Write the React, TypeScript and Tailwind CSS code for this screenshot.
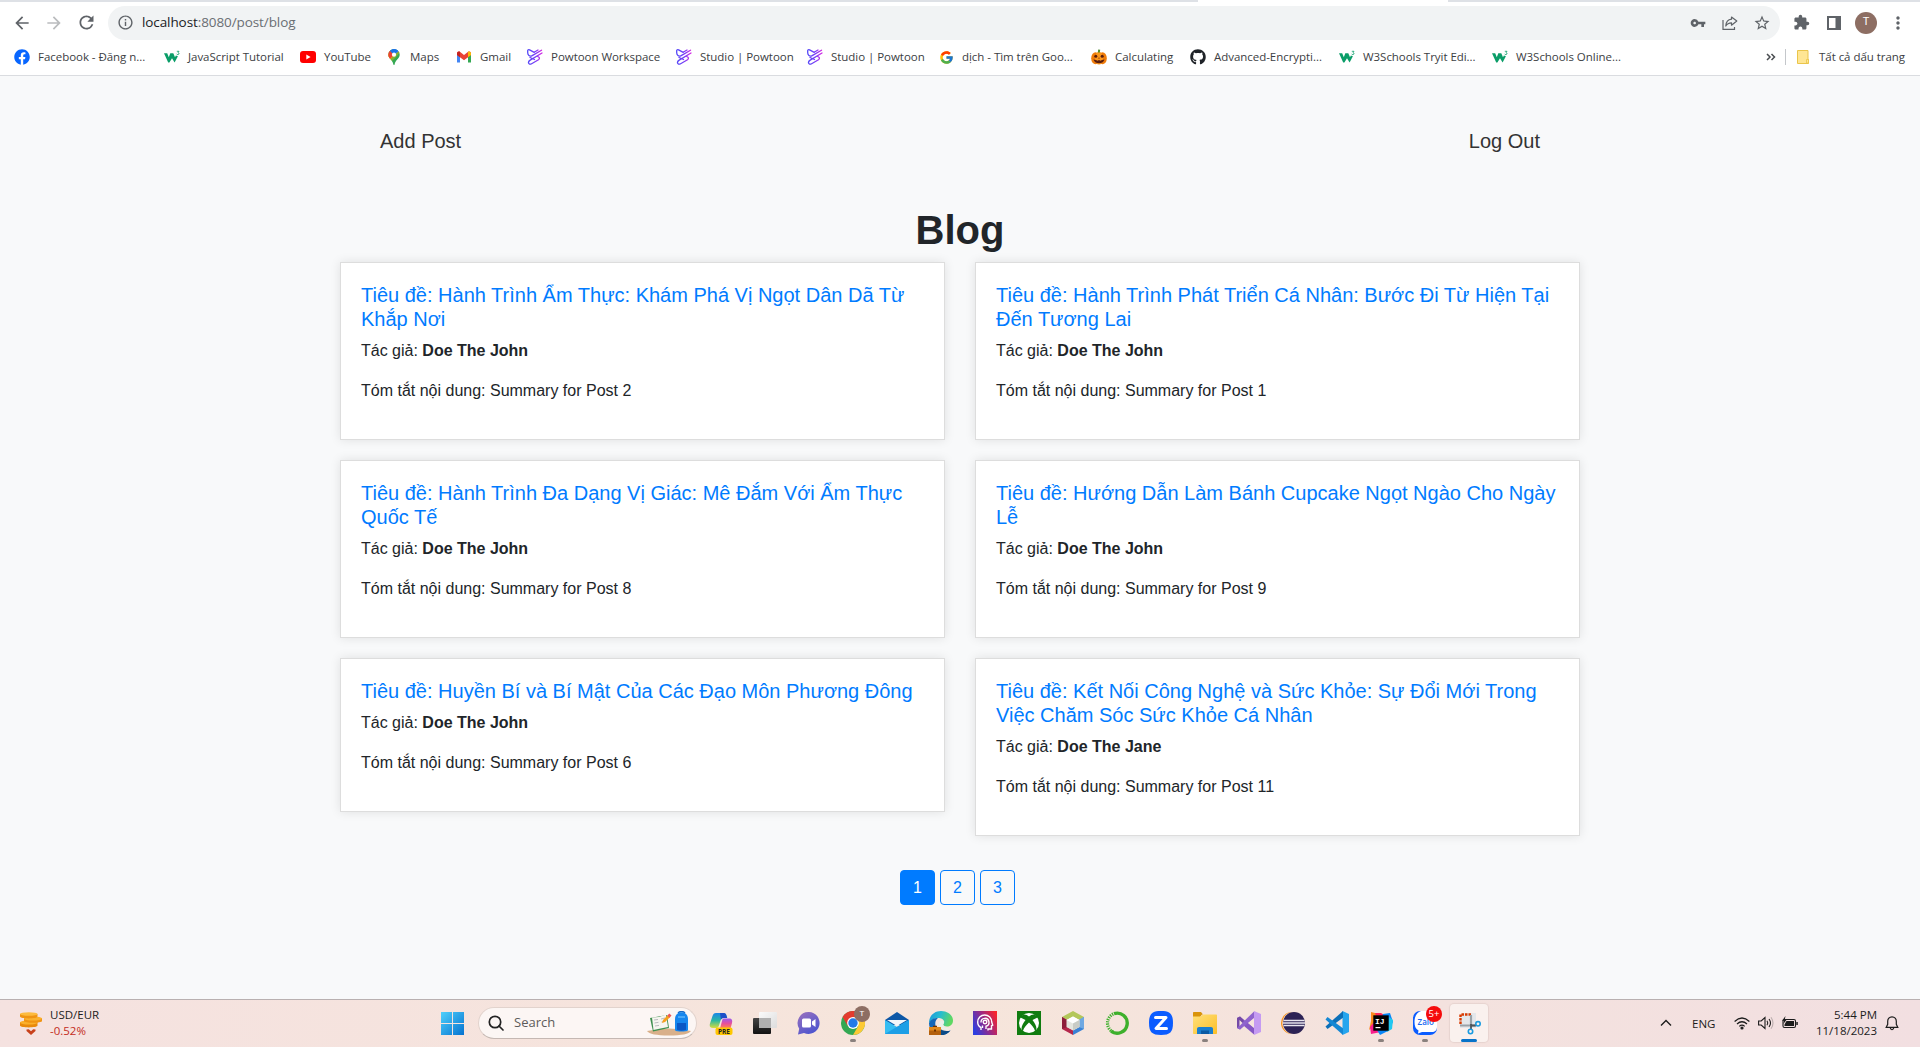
import type { ReactNode } from 'react';
import { FcGoogle } from 'react-icons/fc';
import { FaFacebook, FaGithub } from 'react-icons/fa';
import {
  MdArrowBack, MdArrowForward, MdRefresh, MdInfoOutline, MdVpnKey, MdStarBorder, MdExtension, MdMoreVert,
} from 'react-icons/md';

const W3 = () => (
  <svg viewBox="0 0 16 16" className="size-4">
    <path d="M0 4.200h3.200l1.600 4 1.500-4h3l1.700 4 .9-1.700 2 .8L10.600 13.500 8 9.200 5.400 13.500H4.200Z" fill="#0a9d68" />
    <path d="M12.800 2.300h2.200l-1 1.300c1.400.2 1.300 2-.2 2-.7 0-1-.3-1.200-.8" stroke="#0a9d68" strokeWidth=".8" fill="none" />
  </svg>
);
const YouTube = () => (
  <svg viewBox="0 0 16 16" className="size-4">
    <rect y="2" width="16" height="12" rx="3" fill="#f00" />
    <path d="M6.300 5.500v5l4.300-2.500Z" fill="#fff" />
  </svg>
);
const Maps = () => (
  <svg viewBox="0 0 16 16" className="size-4">
    <defs><clipPath id="pin"><path d="M8 0a5.700 5.700 0 0 1 5.700 5.700C13.700 9.500 9.500 10.500 8.600 15.400q-.6 1.200-1.200 0C6.500 10.500 2.300 9.500 2.300 5.700A5.700 5.700 0 0 1 8 0Z" /></clipPath></defs>
    <g clipPath="url(#pin)">
      <path d="M0 0h16v16H0Z" fill="#34a853" />
      <path d="M8 6 16 0H6Z" fill="#4285f4" />
      <path d="M8 6 2 13 0 8l4-6Z" fill="#fbbc04" />
      <path d="M8 6 4 10 0 7V2l4-1Z" fill="#ea4335" />
      <path d="M8 6 3 1 7-1l6 2Z" fill="#1a73e8" />
      <path d="M8 6 14 1l1 1-5 6-5 5-2-2Z" fill="#fbbc04" opacity=".4" />
    </g>
    <circle cx="8" cy="5.700" r="2.100" fill="#fff" />
  </svg>
);
const Gmail = () => (
  <svg viewBox="0 0 16 16" className="size-4">
    <path d="M1 4v9.500h3V6Z" fill="#4285f4" />
    <path d="M15 4v9.500h-3V6Z" fill="#34a853" />
    <path d="M1 4.500C1 2.500 3 2 4.200 3L8 6l3.800-3C13 2 15 2.500 15 4.500V6l-7 5.200L1 6Z" fill="#ea4335" />
    <path d="M1 4.500C1 2.500 3 2 4 2.800v5.400L1 6Z" fill="#c5221f" />
    <path d="M12 2.800c1-.8 3-.3 3 1.700V6l-3 2.200Z" fill="#fbbc04" />
  </svg>
);
const Powtoon = () => (
  <svg viewBox="0 0 16 16" className="size-4" fill="none" strokeWidth="1.300" strokeLinecap="round">
    <defs>
      <linearGradient id="pow" gradientUnits="userSpaceOnUse" x1="0" y1="8" x2="16" y2="8">
        <stop offset="0" stopColor="#4f46f8" /><stop offset=".55" stopColor="#7a3cf5" /><stop offset="1" stopColor="#e321e0" />
      </linearGradient>
    </defs>
    <path d="M14.500 1.200 5.200 6.600C2.500 8 .7 6 .7 3.600V1.800C.7.700 1.700.4 2.600.9l4.600 2.500M11 1 7.500 3" stroke="url(#pow)" />
    <path d="M15 4 3.200 11.100C.2 13 1.600 16 4.200 15L11.500 10.700c1.500-1 1-2.600-.5-3M3 8.500l4.500 2" stroke="url(#pow)" />
  </svg>
);
const Pumpkin = () => (
  <svg viewBox="0 0 16 16" className="size-4">
    <ellipse cx="4.500" cy="9.200" rx="4.300" ry="6" fill="#ef7c0a" />
    <ellipse cx="11.500" cy="9.200" rx="4.300" ry="6" fill="#ef7c0a" />
    <ellipse cx="8" cy="9.200" rx="4" ry="6.400" fill="#fb961c" />
    <path d="M6.800 3.600 7.200.6l2 .2-.4 2.800Z" fill="#4c8b2b" />
    <circle cx="4.800" cy="7.200" r="1.500" fill="#5b1d0c" /><circle cx="11.200" cy="7.200" r="1.500" fill="#5b1d0c" />
    <path d="M2.500 10.500 5 11l1.500.8L8 11l1.500.8L11 11l2.500-.5q-1 3.700-5.500 3.700t-5.500-3.700Z" fill="#5b1d0c" />
    <path d="m8 8.300-.8 1.200h1.600Z" fill="#5b1d0c" />
  </svg>
);

type Bookmark = { icon: ReactNode; label: string; w: string };
const bookmarks: Bookmark[] = [
  { icon: <FaFacebook className="size-4 text-[#0866ff]" />, label: 'Facebook - Đăng n...', w: 'w-[150px]' },
  { icon: <W3 />, label: 'JavaScript Tutorial', w: 'w-[136px]' },
  { icon: <YouTube />, label: 'YouTube', w: 'w-[86px]' },
  { icon: <Maps />, label: 'Maps', w: 'w-[70px]' },
  { icon: <Gmail />, label: 'Gmail', w: 'w-[71px]' },
  { icon: <Powtoon />, label: 'Powtoon Workspace', w: 'w-[149px]' },
  { icon: <Powtoon />, label: 'Studio | Powtoon', w: 'w-[131px]' },
  { icon: <Powtoon />, label: 'Studio | Powtoon', w: 'w-[131px]' },
  { icon: <FcGoogle className="size-[15px]" />, label: 'dịch - Tìm trên Goo...', w: 'w-[153px]' },
  { icon: <Pumpkin />, label: 'Calculating', w: 'w-[99px]' },
  { icon: <FaGithub className="size-4 text-[#1f2328]" />, label: 'Advanced-Encrypti...', w: 'w-[149px]' },
  { icon: <W3 />, label: 'W3Schools Tryit Edi...', w: 'w-[153px]' },
  { icon: <W3 />, label: 'W3Schools Online...', w: 'w-[140px]' },
];

function Toolbar() {
  return (
    <div className="flex h-[42px] items-center bg-white pb-[1px] pl-3 pr-3 text-[#5f6368]">
      <MdArrowBack className="size-5" />
      <MdArrowForward className="ml-3 size-5 text-[#babcbe]" />
      <MdRefresh className="ml-3 size-[21px]" />
      <div className="ml-[11px] flex h-[34px] w-[1673px] items-center rounded-full bg-[#f1f3f4] pl-[9px] pr-[9px]">
        <MdInfoOutline className="size-[17px]" />
        <div className="ml-2 font-['Open_Sans',sans-serif] text-[13.500px] tracking-[-0.09px] text-[#6a6e73]">
          <span className="text-[#202124]">localhost</span>:8080/post/blog
        </div>
        <MdVpnKey className="ml-auto size-4" />
        <svg viewBox="0 0 16 16" className="ml-4 size-4" fill="none" stroke="currentColor" strokeWidth="1.200">
          <path d="M1 5v9.400h11.500V12" />
          <path d="M9.500 2 14.800 6 9.500 10.200V7.800C6.500 7.800 5 8.800 3.800 11 4 7 6 4.600 9.500 4.200Z" strokeLinejoin="round" />
        </svg>
        <MdStarBorder className="ml-[15px] size-[18px]" />
      </div>
      <MdExtension className="ml-[13px] size-[17px]" />
      <svg viewBox="0 0 14 14" className="ml-[17px] size-[14px]"><path fillRule="evenodd" d="M0 0h14v14H0ZM2 2v10h6.500V2Z" fill="currentColor" /></svg>
      <div className="ml-[14px] flex size-[22px] items-center justify-center rounded-full bg-[#8d6e63] font-[Roboto,sans-serif] text-[11px] text-white">T</div>
      <MdMoreVert className="ml-[11px] size-5" />
    </div>
  );
}

function BookmarksBar() {
  return (
    <div className="flex h-8 items-center border-b border-[#dadce0] bg-white pb-[5px] pl-[14px] font-['Open_Sans',sans-serif] text-[11.500px] tracking-[-0.04px] text-[#3c4043]">
      {bookmarks.map((b, i) => (
        <div key={i} className={`flex shrink-0 items-center gap-2 whitespace-nowrap ${b.w}`}>
          <span className="flex w-4 shrink-0 justify-center">{b.icon}</span>
          {b.label}
        </div>
      ))}
      <div className="ml-auto flex items-center pr-[14px]">
        <svg viewBox="0 0 10 8" className="h-2 w-[10px]" fill="none" stroke="#4a4d51" strokeWidth="1.500"><path d="m1 1 3 3-3 3M5.500 1l3 3-3 3" /></svg>
        <span className="ml-[9px] h-4 w-px bg-[#c4c7cb]" />
        <svg viewBox="0 0 12 14" className="ml-[11px] h-[14px] w-3"><path d="M.5.500h10.500v9h.5v4H.5Z" fill="#ffe694" stroke="#eac54a" /><path d="M9.500 13V9.500h2V13Z" fill="#ffe694" stroke="#eac54a" strokeWidth=".8" /></svg>
        <span className="ml-[10px] w-[87px] whitespace-nowrap">Tất cả dấu trang</span>
      </div>
    </div>
  );
}

type Post = { title: string; author: string; n: number };
const posts: Post[] = [
  { title: 'Hành Trình Ẩm Thực: Khám Phá Vị Ngọt Dân Dã Từ Khắp Nơi', author: 'Doe The John', n: 2 },
  { title: 'Hành Trình Phát Triển Cá Nhân: Bước Đi Từ Hiện Tại Đến Tương Lai', author: 'Doe The John', n: 1 },
  { title: 'Hành Trình Đa Dạng Vị Giác: Mê Đắm Với Ẩm Thực Quốc Tế', author: 'Doe The John', n: 8 },
  { title: 'Hướng Dẫn Làm Bánh Cupcake Ngọt Ngào Cho Ngày Lễ', author: 'Doe The John', n: 9 },
  { title: 'Huyền Bí và Bí Mật Của Các Đạo Môn Phương Đông', author: 'Doe The John', n: 6 },
  { title: 'Kết Nối Công Nghệ và Sức Khỏe: Sự Đổi Mới Trong Việc Chăm Sóc Sức Khỏe Cá Nhân', author: 'Doe The Jane', n: 11 },
];

function BlogPage() {
  return (
    <main className="flex-1 bg-[#f8f9fa] pt-[50px] font-['Liberation_Sans',Arial,sans-serif] text-base leading-6 text-[#212529]">
      <div className="mx-auto w-[1240px]">
        <nav className="flex justify-between px-10 text-xl leading-[30px] text-[#333]">
          <a>Add Post</a>
          <a>Log Out</a>
        </nav>
        <h1 className="mt-[50px] mb-2 text-center text-[40px] leading-[48px] font-bold">Blog</h1>
        <div className="grid grid-cols-2 items-start gap-x-[30px] gap-y-5">
          {posts.map((p) => (
            <article key={p.n} className="border border-[#ddd] bg-white p-5 shadow-[0_0_10px_rgba(0,0,0,0.1)]">
              <h5 className="mb-2 text-xl leading-6 text-[#007bff]">Tiêu đề: {p.title}</h5>
              <p className="mb-4">Tác giả: <b className="font-bold">{p.author}</b></p>
              <p className="mb-4">Tóm tắt nội dung: Summary for Post {p.n}</p>
            </article>
          ))}
        </div>
        <div className="mt-[34px] flex justify-center gap-[5px] pr-[5px] text-[#007bff]">
          {[1, 2, 3].map((n) => (
            <a key={n} className={`flex h-[35px] w-[35px] items-center justify-center rounded border border-[#007bff] ${n === 1 ? 'bg-[#007bff] text-white' : ''}`}>{n}</a>
          ))}
        </div>
      </div>
    </main>
  );
}

const Svg = ({ children }: { children: ReactNode }) => <svg viewBox="0 0 24 24" className="size-6">{children}</svg>;

const Copilot = () => (
  <Svg>
    <defs>
      <linearGradient id="cpA" x1="0" y1="0" x2="0" y2="1"><stop stopColor="#1a86e8" /><stop offset=".5" stopColor="#2bb8a3" /><stop offset="1" stopColor="#d7dc3c" /></linearGradient>
      <linearGradient id="cpB" x1="0" y1="0" x2="0" y2="1"><stop stopColor="#9c5af0" /><stop offset=".5" stopColor="#e7509a" /><stop offset="1" stopColor="#ff8a4c" /></linearGradient>
    </defs>
    <path d="M7 2h7.500c2 0 2.500 1 3 2.800l.7 2.200h-3.500c-2 0-2.700 1-3.300 3l-1.500 4.700C9.300 16.500 8.500 17 7 17H4c-3 0-3.800-2-3-4.500L3.500 5C4.200 3 5 2 7 2Z" fill="url(#cpA)" />
    <path d="M11 2h3.500c2 0 2.500 1 3 2.800l.7 2.200h-3.500c-1.300 0-2.200.5-2.800 1.800Z" fill="#1d50c8" />
    <path d="M14.500 7.500H20c3 0 3.700 2 3 4.500l-1.500 5.500H11l2-7.500c.4-1.500.8-2.500 1.500-2.500Z" fill="url(#cpB)" />
    <rect x="6.500" y="16.500" width="17" height="7.500" rx="2" fill="#ffc800" />
    <text x="15" y="22.800" textAnchor="middle" fontSize="6.500" fontWeight="700" fontFamily="Open Sans" fill="#222">PRE</text>
  </Svg>
);
const TaskView = () => (
  <Svg>
    <defs>
      <linearGradient id="tvD" x2="0" y2="1"><stop stopColor="#444" /><stop offset="1" stopColor="#111" /></linearGradient>
      <linearGradient id="tvL" x2="1" y2="1"><stop stopColor="#fbfbfb" /><stop offset="1" stopColor="#dcdcdc" /></linearGradient>
    </defs>
    <rect y="7" width="18" height="16" rx="1" fill="url(#tvD)" />
    <rect x="6" y="1" width="18" height="16" rx="1" fill="url(#tvL)" />
    <path d="M6 7h12v10H6Z" fill="#b0b0b0" />
  </Svg>
);
const Teams = () => (
  <Svg>
    <defs><linearGradient id="tm" x1="0" y1="0" x2=".6" y2="1"><stop stopColor="#9b72bd" /><stop offset="1" stopColor="#4e55cf" /></linearGradient></defs>
    <path d="M12 1a11 11 0 1 1-5 21L1 23.500l1.200-5.800A11 11 0 0 1 12 1Z" fill="url(#tm)" />
    <rect x="5" y="7.500" width="9" height="9" rx="1.500" fill="#fff" />
    <path d="m15 10.500 3.500-2.500v8L15 13.500Z" fill="#fff" />
  </Svg>
);
const Chrome = () => (
  <div className="relative">
    <Svg>
      <circle cx="12" cy="12" r="12" fill="#34a853" />
      <path d="M12 12 1.600 6A12 12 0 0 1 22.400 6Z" fill="#e33b2e" />
      <path d="M12 6H22.400A12 12 0 0 1 12 24L17.200 15Z" fill="#fcc934" />
      <path d="M1.600 6 6.800 15 12 12V6Z" fill="#e33b2e" />
      <circle cx="12" cy="12" r="5.900" fill="#fff" /><circle cx="12" cy="12" r="4.700" fill="#2379e8" />
    </Svg>
    <span className="absolute -top-[5px] left-[13px] flex size-4 items-center justify-center rounded-full bg-[#8d6e63] font-[Roboto,sans-serif] text-[8px] text-white">T</span>
  </div>
);
const Mail = () => (
  <Svg>
    <path d="M0 9 12 1l12 8v5H0Z" fill="#0d57a6" />
    <path d="M0 9 12 16l12-7v14H0Z" fill="#35bdf2" /><path d="M0 23 12 15.800 24 9v14Z" fill="#1e9fe6" />
    <path d="M2 9h20l-10 6Z" fill="#f4f7fa" />
  </Svg>
);
const Edge = () => (
  <Svg>
    <defs><linearGradient id="ed" x2="1" y2=".3"><stop stopColor="#1b96dc" /><stop offset=".5" stopColor="#26bcd0" /><stop offset="1" stopColor="#5fd863" /></linearGradient></defs>
    <path d="M0 12C0 5 5 0 12 0c7 0 12 4.500 12 9.500 0 4-3 6-6 6-2 0-3.800-.7-3.800-2 0-.8 1-1 1-2.700C15 8.500 12 7 9 7c-4 0-7 2-9 5Z" fill="url(#ed)" />
    <path d="M0 12c2-4 5-5 9-5-2.500 2-3.500 5-2 9 1.500 4 7 7 14.500 3.400C19 22.700 15.500 24 12 24 5 24 0 19 0 12Z" fill="#1367b8" />
    <path d="M10 15c-.7-2 0-4 2-5.500 2 0 3.500 1 3 2.500-.5 1-1.500 1.500-.3 3 1.500 2.500 5.300 2.800 7.300 2.200C17 20 11.500 19 10 15Z" fill="#e9efe9" />
    <path d="M10 17c3 3 8 3.500 11.500 2.400C18.500 23 15 24 12 24Z" fill="#0b4a86" />
    <rect y="16" width="12" height="8" fill="#b3600e" /><path d="M0 16h12v3.500H0Z" fill="#e28a1d" /><path d="M4 16v-1.300h4V16M5 18.500h2v2H5Z" fill="#6e3200" />
  </Svg>
);
const HeadApp = () => (
  <Svg>
    <defs><linearGradient id="hd" x1="0" y1=".7" x2="1" y2=".2"><stop stopColor="#2d3ee0" /><stop offset=".55" stopColor="#a0287e" /><stop offset="1" stopColor="#f9252c" /></linearGradient></defs>
    <path d="M0 0h24v24H0Z" fill="url(#hd)" />
    <g fill="none" stroke="#fff" strokeWidth="1.400"><path d="M8 19v-2.500C5.500 15.500 4.700 13 4.700 11a7 7 0 0 1 14 0l1 3.200-1.200.6V18H15v1.500" /><path d="M9.500 17v-2.500M8 11.500a4 4 0 1 1 5 3.700V18" /><circle cx="12" cy="11" r="1.800" /></g>
  </Svg>
);
const Xbox = () => (
  <Svg>
    <path d="M0 0h24v24H0Z" fill="#107c10" /><circle cx="12" cy="12" r="10" fill="#fff" />
    <path d="M12 5.500C9.500 3.400 7 2.800 5.500 4.300c-.8-.3-2.200 1-2.500 2L8.500 9C5 13.500 3.800 17 5 19.500l.8.7C7 16.500 9.700 13.500 12 11.500c2.300 2 5 5 6.200 8.700l.8-.7c1.200-2.500 0-6-3.500-10.500L21 6.300c-.3-1-1.700-2.300-2.500-2C17 2.800 14.500 3.400 12 5.500Z" fill="#107c10" />
  </Svg>
);
const NetBeans = () => (
  <Svg>
    <path d="m12 0 11 6-5 3-6-3.200L6 9 1 6Z" fill="#b3c75a" /><path d="m1 6 5 3v7l6 3v5L1 18Z" fill="#b5284c" /><path d="M1 6l5 3v7l-5 2Z" fill="#8d1e3c" />
    <path d="m23 6-5 3v7l-6 3v5l11-6Z" fill="#3a82d6" /><path d="m23 6-5 3v7l5 2Z" fill="#6fa8e2" />
    <path d="m12 5.500 6.500 3.500v7L12 19.500 5.500 16V9Z" fill="#e4e6e0" /><path d="m12 5.500 6.500 3.500L12 12.500 5.500 9Z" fill="#fff" /><path d="M12 12.500v7l6.500-3.500V9Z" fill="#c9ccc6" />
  </Svg>
);
const Anaconda = () => (
  <Svg>
    <path d="M9 2.700A10 10 0 1 1 6 20" fill="none" stroke="#3eb02c" strokeWidth="3.400" />
    <path d="M8 21A10 10 0 0 1 9 2.700" fill="none" stroke="#3eb02c" strokeWidth="3.200" strokeDasharray="1.300 1" />
  </Svg>
);
const ZApp = () => (
  <Svg><path d="M12 0c9 0 12 3 12 12s-3 12-12 12S0 21 0 12 3 0 12 0Z" fill="#0b5cff" /><path d="M6.500 6.500h10.500L7 17.500h10.500" fill="none" stroke="#fff" strokeWidth="3" strokeLinejoin="round" strokeLinecap="round" /></Svg>
);
const Explorer = () => (
  <Svg>
    <path d="M0 2c0-.6.400-1 1-1h7l2 2.500h-1L7 6H0Z" fill="#d9930a" />
    <defs><linearGradient id="ex" x2="1" y2="1"><stop stopColor="#ffe07a" /><stop offset="1" stopColor="#fcbf28" /></linearGradient></defs>
    <path d="M0 5.500h7.500L10 3.500h13c.6 0 1 .4 1 1V22c0 .6-.4 1-1 1H1c-.6 0-1-.4-1-1Z" fill="url(#ex)" />
    <path d="M4 23v-5c0-1.200.8-2 2-2h12c1.200 0 2 .8 2 2v5Z" fill="#1a7fd0" /><path d="M8 19.500h8v3.500H8Z" fill="#0b5aa3" />
  </Svg>
);
const VisualStudio = () => (
  <Svg>
    <path d="m0 7 3-1.500L17 17v6.500L0 9Z" fill="#8657c4" /><path d="M0 7v10l3 1.500L6.500 15V9L3 5.500Z" fill="#744aa6" />
    <path d="M0 17 17 .5V7L3 18.500Z" fill="#8f63cd" /><path d="m17 0 7 3v18l-7 3Z" fill="#c59bf2" /><path d="M2.500 9v6l3-3Z" fill="#f6e4de" /><path d="M17 7.500v9L11.500 12Z" fill="#f6e4de" />
  </Svg>
);
const Eclipse = () => (
  <Svg>
    <circle cx="11" cy="12" r="11" fill="#f7941e" /><circle cx="12.300" cy="12" r="11" fill="#f6e4de" /><circle cx="13" cy="12" r="11" fill="#2c2255" />
    <path d="M2.500 9.500h21M2 12h22M2.500 14.500h21" stroke="#e8e6ef" strokeWidth="1.300" />
  </Svg>
);
const VSCode = () => (
  <Svg>
    <path d="m17.500 0 6.500 3v18l-6.500 3Z" fill="#26a5ee" /><path d="M18 0 .5 15.500 2.500 18 18 6.700Z" fill="#0d70b8" /><path d="M18 24 .5 8.500 2.500 6 18 17.300Z" fill="#1487d4" />
  </Svg>
);
const IntelliJ = () => (
  <Svg>
    <path d="m2 1 8 2-3 9-7 7 2-9Z" fill="#fc8a1e" /><path d="m1 16 5-6 6 11-10 2Z" fill="#f91d8c" /><path d="M6 2h6l5 3-8 6Z" fill="#fe2857" />
    <path d="m14 3 7-1 3 9-5 9-8 4-3-5Z" fill="#0a87f7" /><path d="m20 6 4 3-1 9-5 3Z" fill="#21c8f0" />
    <path d="M4.300 4.300h15.400v15.400H4.300Z" fill="#000" />
    <text x="6" y="12.500" fontSize="8" fontWeight="700" fontFamily="Liberation Mono" fill="#fff">IJ</text><path d="M6.500 16h5v1.200h-5Z" fill="#fff" />
  </Svg>
);
const Zalo = () => (
  <div className="relative">
    <Svg>
      <rect width="24" height="24" rx="7" fill="#0a5cff" /><path d="M8 0h9c4 0 7 3 7 7v9c0 3-2 5-5 5H9l-4 1.500 .5-3C2.500 18 1.500 15 1.500 11 1.500 5 4 1.500 8 0Z" fill="#fff" />
      <text x="12.800" y="13.800" textAnchor="middle" fontSize="8" fontWeight="600" fontFamily="Open Sans" fill="#1668f0">Zalo</text>
    </Svg>
    <span className="absolute -top-[5px] left-[13px] flex size-4 items-center justify-center rounded-full bg-[#f50b0b] font-['Open_Sans',sans-serif] text-[9.500px] text-white">5+</span>
  </div>
);
const Snip = () => (
  <Svg>
    <path d="M7 2h12v15H3V6Z" fill="#e4e7ea" />
    <path d="M3.500 13V3.500h10.500" fill="none" stroke="#d83b01" strokeWidth="2.400" strokeDasharray="2.500 1" />
    <path d="M14 4v10M3 14.500h15" stroke="#9aa2a8" strokeWidth="2.200" /><path d="M14 13v5M14 14.500h5" stroke="#4c555b" strokeWidth="1.800" />
    <circle cx="13.500" cy="20.500" r="2.200" fill="none" stroke="#1a9be0" strokeWidth="1.600" /><circle cx="21" cy="12.800" r="2.200" fill="none" stroke="#1a9be0" strokeWidth="1.600" />
  </Svg>
);

type App = { icon: ReactNode; state?: 'running' | 'active' };
const apps: App[] = [
  { icon: <Copilot /> }, { icon: <TaskView /> }, { icon: <Teams /> }, { icon: <Chrome />, state: 'running' },
  { icon: <Mail /> }, { icon: <Edge /> }, { icon: <HeadApp /> }, { icon: <Xbox /> }, { icon: <NetBeans /> },
  { icon: <Anaconda /> }, { icon: <ZApp /> }, { icon: <Explorer />, state: 'running' }, { icon: <VisualStudio /> },
  { icon: <Eclipse /> }, { icon: <VSCode /> }, { icon: <IntelliJ />, state: 'running' },
  { icon: <Zalo />, state: 'running' }, { icon: <Snip />, state: 'active' },
];

function Taskbar() {
  return (
    <footer className="flex h-12 items-center border-t border-[#b9b0b0] bg-linear-to-r from-[#f5e2e0] via-[#f6e5db] to-[#f2dfe1] pb-px font-['Open_Sans',sans-serif] text-[11.500px] text-[#1c1c1c]">
      <div className="flex w-[440px] items-center pl-5">
        <svg viewBox="0 0 22 23" className="h-[23px] w-[22px]">
          <path d="M0 10v3.500C0 16 17.500 16 17.500 13.500V10Z" fill="#e98a0c" /><ellipse cx="8.800" cy="10.500" rx="8.800" ry="2" fill="#fbb02c" />
          <path d="M4 6v3c0 2.400 18 2.400 18 0V6Z" fill="#f09413" /><ellipse cx="13" cy="6.500" rx="9" ry="2" fill="#fbb22e" />
          <path d="M0 2v2.500C0 7 17.500 7 17.500 4.500V2Z" fill="#ef9413" /><ellipse cx="8.800" cy="2" rx="8.800" ry="1.800" fill="#fdbb3e" />
          <path d="m6.500 17.500 2.300-.3 2.200 2 2.200-2 2.300.3v1.500L11 23l-4.500-4Z" fill="#c8411b" />
        </svg>
        <div className="ml-2 leading-4"><div>USD/EUR</div><div className="text-[#c42b1c]">-0.52%</div></div>
      </div>
      <svg viewBox="0 0 23 23" className="ml-[1px] size-[23px]">
        <defs><linearGradient id="win" x2="1" y2="1"><stop stopColor="#4fd0fb" /><stop offset="1" stopColor="#0572d0" /></linearGradient></defs>
        <path d="M0 0h11v11H0ZM12 0h11v11H12ZM0 12h11v11H0ZM12 12h11v11H12Z" fill="url(#win)" />
      </svg>
      <div className="ml-[14px] flex h-8 w-[219px] items-center rounded-full border border-[#e2d3cd] border-b-[#c5b8b3] bg-[#fcf6f4] pl-[9px] pr-[5px]">
        <svg viewBox="0 0 16 16" className="size-4" fill="none" stroke="#222" strokeWidth="1.700"><circle cx="7" cy="7" r="5.700" /><path d="m11 11 4 4" strokeLinecap="round" /></svg>
        <span className="ml-[10px] text-[13px] text-[#5d5b5a]">Search</span>
        <svg viewBox="0 0 44 25" className="ml-auto h-[25px] w-11">
          <path d="M0 20q22-5 44 0-3 4.500-22 4.500T0 20Z" fill="#d9b08a" />
          <path d="m3 7 17-3 2 13-16 3.500Z" fill="#3f8f4f" /><path d="m5 6.500 7-.5 1.500 11.500-7 1.500ZM12 6l7-2.500 2 12.500-7.500 1.500Z" fill="#f7f5f0" />
          <path d="m7 9 4-.5M7.500 12l4-.7M8 15l4-.6M14 8l4-1M14.500 11l4-1" stroke="#a9abb0" strokeWidth=".8" />
          <path d="m15 12 1-3 5-5 2.200 2L18 11Z" fill="#f6a01d" /><path d="m20.300 4.500 2-2 2.200 2-2 2.200Z" fill="#ec5757" />
          <path d="M31 2q3.500-3 7 0" stroke="#1767c2" strokeWidth="1.500" fill="none" /><path d="M28 8c0-9 13-9 13 0v11c0 2-13 2-13 0Z" fill="#1686ee" /><path d="M30 12h9v6.500c0 1.500-9 1.500-9 0Z" fill="#0b57c5" /><path d="M31 6h7" stroke="#7ecbff" />
        </svg>
      </div>
      <div className="ml-[2px] flex">
        {apps.map((a, i) => (
          <div key={i} className="flex w-11 justify-center">
            <div className={`relative flex h-[38px] w-[38px] items-center justify-center rounded ${a.state === 'active' ? 'bg-[#faf1ee] shadow-[0_0_1px_1px_rgba(120,90,80,0.1)]' : ''}`}>
              {a.icon}
              {a.state === 'running' && <span className="absolute bottom-0 h-[3px] w-[6px] rounded-full bg-[#8a817e]" />}
              {a.state === 'active' && <span className="absolute bottom-0 h-[3px] w-4 rounded-full bg-[#0873c9]" />}
            </div>
          </div>
        ))}
      </div>
      <div className="ml-auto flex items-center pr-[21px]">
        <svg viewBox="0 0 12 8" className="h-2 w-3" fill="none" stroke="#1c1c1c" strokeWidth="1.400"><path d="m1 6.500 5-5 5 5" /></svg>
        <span className="ml-5 w-[23px] pt-px whitespace-nowrap">ENG</span>
        <svg viewBox="0 0 16 14" className="ml-[19px] h-[14px] w-4" fill="none" stroke="#1c1c1c" strokeWidth="1.200"><path d="M.6 5.500q7.400-7 14.800 0M3 8q5-4.500 10 0M5.300 10.400q2.700-2.400 5.400 0" /><circle cx="8" cy="12" r="1" fill="#1c1c1c" /></svg>
        <svg viewBox="0 0 16 14" className="ml-2 h-[14px] w-4" fill="none" stroke="#1c1c1c" strokeWidth="1.100"><path d="M.6 5v4h2.600L7 12.500v-11L3.200 5ZM9 4.800q1.600 2.200 0 4.400M11 3q3 4 0 8" /><path d="M13 1.200q4 5.800 0 11.600" opacity=".25" /></svg>
        <svg viewBox="0 0 16 14" className="ml-2 h-[14px] w-4"><rect x="1" y="3.500" width="12.500" height="8" rx="1.500" fill="none" stroke="#1c1c1c" strokeWidth="1.100" /><path d="M4.500 5H12v5H2.500V8.500ZM14.300 6h1.500v3h-1.500ZM3.500 0 0 4.800h2L1.300 8l3.500-4.500h-2Z" fill="#1c1c1c" /></svg>
        <div className="ml-4 flex w-[63px] flex-col items-end leading-4 whitespace-nowrap"><div>5:44 PM</div><div>11/18/2023</div></div>
        <svg viewBox="0 0 14 15" className="ml-2 h-[15px] w-[14px]" fill="none" stroke="#1c1c1c" strokeWidth="1.200"><path d="M7 .8c2.700 0 4.300 2 4.300 4.500v3l1.500 3H1.200l1.500-3v-3C2.700 2.800 4.300.8 7 .8ZM5.200 12q1.800 3.500 3.600 0" /></svg>
      </div>
    </footer>
  );
}

export default function App() {
  return (
    <div className="flex h-[1047px] w-[1920px] flex-col overflow-hidden bg-[#f8f9fa]">
      <div className="flex h-[2px] shrink-0 bg-[#dee1e6]"><span className="ml-[1198px] w-[250px] bg-white" /></div>
      <Toolbar />
      <BookmarksBar />
      <BlogPage />
      <Taskbar />
    </div>
  );
}
